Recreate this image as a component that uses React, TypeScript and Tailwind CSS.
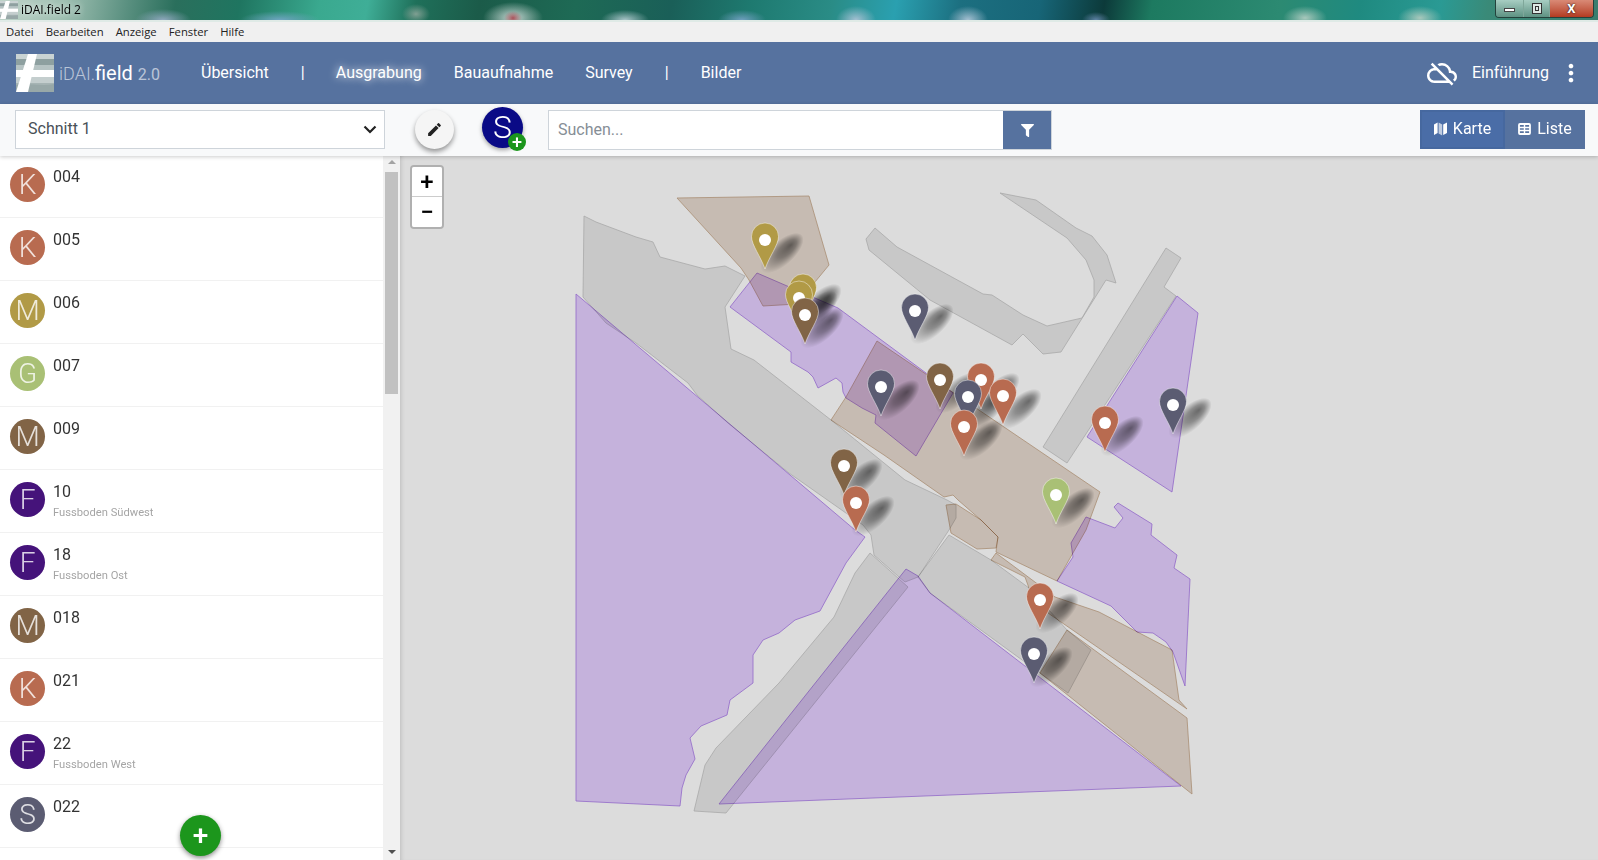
import React from "react";
import { FaFilter } from "react-icons/fa";
import { MdEdit, MdMoreVert, MdOutlineCloudOff } from "react-icons/md";

const RED = "#b86b50";
const DARK = "#5b5c72";
const BROWN = "#816446";
const GOLD = "#b19a46";
const GREEN = "#a9c075";
const PURPLE = "#45137a";

const rows = [
  { id: "004", letter: "K", color: RED },
  { id: "005", letter: "K", color: RED },
  { id: "006", letter: "M", color: GOLD },
  { id: "007", letter: "G", color: GREEN },
  { id: "009", letter: "M", color: BROWN },
  { id: "10", letter: "F", color: PURPLE, sub: "Fussboden Südwest" },
  { id: "18", letter: "F", color: PURPLE, sub: "Fussboden Ost" },
  { id: "018", letter: "M", color: BROWN },
  { id: "021", letter: "K", color: RED },
  { id: "22", letter: "F", color: PURPLE, sub: "Fussboden West" },
  { id: "022", letter: "S", color: DARK },
];

const purple = [
  "576,294 855,530 865,537 846,563 820,611 795,620 779,633 763,640 753,655 753,683 730,700 727,715 701,726 690,738 695,759 686,775 682,788 680,806 576,801",
  "719,804 906,569 918,576 930,593 1181,786",
  "757,273 838,308 926,373 953,393 916,456 875,423 876,415 862,408 846,398 843,392 842,383 836,378 818,388 813,377 808,372 791,362 791,352 730,307",
  "1177,296 1198,313 1172,492 1087,437",
  "1086,517 1115,528 1123,518 1114,507 1118,503 1152,524 1151,535 1177,555 1174,568 1190,579 1185,686 1173,652 1166,642 1153,633 1137,632 1111,606 1057,581 1073,557 1071,543",
];

const brown = [
  "677,198 809,196 829,265 815,282 797,304 763,306 749,280 741,268",
  "877,341 1100,492 1086,530 1057,581 996,552 998,537 981,520 958,500 953,495 944,497 884,455 831,420 846,397",
  "946,505 956,504 981,520 998,537 996,548 977,549 951,533",
  "996,553 991,560 1025,577 1029,588 1048,613 1187,709 1179,700 1172,650 1099,612 1055,597",
  "1067,630 1187,718 1192,794 1040,673",
];

const grey = [
  "584,216 596,222 636,237 653,242 660,257 705,269 725,266 745,276 725,307 731,349 754,360 831,420 905,480 947,500 956,505 956,518 949,530 918,577 905,582 899,577 874,555 871,535 863,525 789,473 728,423 697,395 688,383 636,343 606,323 583,297",
  "949,535 991,560 1029,588 1067,630 1091,650 1068,693 1040,673 930,593 918,577",
  "870,553 908,587 726,813 694,811 705,765 716,748 779,683 834,617 855,573",
  "875,228 897,247 983,294 992,295 1023,315 1047,326 1082,318 1094,297 1094,280 1086,260 1067,238 1000,193 1036,200 1076,228 1092,236 1107,255 1116,283 1106,280 1061,352 1043,354 1023,334 1012,345 930,300 869,250 866,239",
  "1166,248 1181,258 1164,287 1176,296 1067,463 1043,447",
];

const pins = [
  { x: 765, y: 240, color: GOLD },
  { x: 803, y: 291, color: GOLD },
  { x: 799, y: 298, color: GOLD },
  { x: 805, y: 315, color: BROWN },
  { x: 915, y: 311, color: DARK },
  { x: 981, y: 380, color: RED },
  { x: 940, y: 380, color: BROWN },
  { x: 881, y: 387, color: DARK },
  { x: 968, y: 397, color: DARK },
  { x: 1003, y: 396, color: RED },
  { x: 964, y: 427, color: RED },
  { x: 1105, y: 423, color: RED },
  { x: 1173, y: 405, color: DARK },
  { x: 844, y: 466, color: BROWN },
  { x: 856, y: 503, color: RED },
  { x: 1056, y: 495, color: GREEN },
  { x: 1040, y: 600, color: RED },
  { x: 1034, y: 654, color: DARK },
];

function Logo({ size }: { size: number }) {
  return (
    <svg width={size} height={size} viewBox="0 0 38 38">
      <rect width="38" height="38" fill="#a6b4b4" />
      <rect y="0" width="38" height="5" fill="#c9d3d3" />
      <rect y="5" width="38" height="6" fill="#8ea0a0" />
      <rect y="11" width="38" height="5" fill="#b6c3c3" />
      <rect y="23" width="38" height="6" fill="#c4cece" />
      <path d="M0 31 C10 28 25 33 38 30 V38 H0Z" fill="#98a8a8" />
      <path d="M0 16 H38 V23 H0Z" fill="#fff" />
      <path d="M0 38 L12 0 H21 L12 38Z" fill="#fff" />
    </svg>
  );
}

function TitleBar() {
  return (
    <div className="h-[22px] shrink-0 flex border-b-2 border-[#dfeae6] bg-[radial-gradient(ellipse_9px_7px_at_513px_18px,#a8525a,transparent),radial-gradient(ellipse_30px_16px_at_513px_18px,#c8d8d4,transparent),radial-gradient(ellipse_28px_11px_at_163px_20px,#8fa8bd,transparent),radial-gradient(ellipse_40px_9px_at_280px_20px,#6fa5c0,transparent),radial-gradient(ellipse_14px_10px_at_416px_14px,#7f9f92,transparent),radial-gradient(ellipse_24px_10px_at_625px_20px,#a9c4c8,transparent),radial-gradient(ellipse_24px_10px_at_742px_20px,#6f9fbe,transparent),radial-gradient(ellipse_20px_14px_at_856px_20px,#a5c0d2,transparent),radial-gradient(ellipse_20px_14px_at_968px_20px,#a5c0d2,transparent),radial-gradient(ellipse_14px_8px_at_1096px_20px,#5f83a5,transparent),radial-gradient(ellipse_22px_12px_at_1305px_18px,#a8c8bc,transparent),radial-gradient(ellipse_22px_12px_at_1420px_18px,#a8c8bc,transparent),linear-gradient(100deg,#bfd3c9_0%,#9fc0b2_4%,#5a9080_8%,#2a6f5c_11%,#1f7560_15%,#3aa98f_20%,#3fae97_23%,#1f705a_26%,#1b5b49_30%,#1e6a55_36%,#1a5f58_42%,#1e7a70_47%,#2a8c86_52%,#2aa0b0_56%,#1c6f80_60%,#176577_65%,#0c3a3a_69%,#1d7a60_72%,#2c8a72_80%,#1f8a80_85%,#2a9a94_90%,#3a8a78_93%,#3b7d6e_100%)]">
      <div className="flex items-center">
        <Logo size={18} />
        <span className="ml-[3px] font-['Open_Sans',sans-serif] text-[12px] text-black [text-shadow:0_0_6px_white]">iDAI.field 2</span>
      </div>
      <div className="ml-auto mr-[4px] flex h-[18px] w-[99px] overflow-hidden rounded-b-[4px] border border-t-0 border-[#24423c] text-white">
        <div className="flex w-[28px] items-center justify-center border-r border-[#7fa79a] bg-gradient-to-b from-[#a7cdc2] to-[#5f9384]">
          <span className="mt-[2px] h-[4px] w-[11px] border border-[#444] bg-white" />
        </div>
        <div className="flex w-[26px] items-center justify-center border-r border-[#7fa79a] bg-gradient-to-b from-[#a7cdc2] to-[#5f9384]">
          <span className="flex h-[11px] w-[10px] items-center justify-center border border-[#333] bg-[#dde8e4]">
            <span className="h-[5px] w-[4px] border border-[#333]" />
          </span>
        </div>
        <div className="flex flex-1 items-center justify-center bg-gradient-to-b from-[#d98a76] to-[#b23a20] text-[13px] font-bold leading-none [text-shadow:0_0_2px_black]">
          X
        </div>
      </div>
    </div>
  );
}

function MenuBar() {
  return (
    <div className="h-[20px] shrink-0 flex items-center gap-[12px] bg-[#f0f0f0] pl-[6px] font-['Open_Sans',sans-serif] text-[11.3px] text-[#222]">
      {["Datei", "Bearbeiten", "Anzeige", "Fenster", "Hilfe"].map((m) => (
        <span key={m}>{m}</span>
      ))}
    </div>
  );
}

function Header() {
  return (
    <header className="h-[62px] shrink-0 flex items-center bg-[#56729f] text-white">
      <div className="ml-[16px] flex">
        <Logo size={38} />
      </div>
      <div className="ml-[5px] w-[126px] whitespace-nowrap">
        <span className="text-[18px] font-light text-white/60">iDAI.</span>
        <span className="text-[20px]">field</span>
        <span className="ml-[5px] text-[16px] text-white/60">2.0</span>
      </div>
      <nav className="flex items-center text-[16px]">
        <a className="px-4">Übersicht</a>
        <span className="ml-[16px] mr-[18px] w-[1px]">|</span>
        <a className="px-4 [text-shadow:0_0_8px_white]">Ausgrabung</a>
        <a className="px-4">Bauaufnahme</a>
        <a className="px-4">Survey</a>
        <span className="ml-[16px] mr-[19px] w-[1px]">|</span>
        <a className="px-4">Bilder</a>
      </nav>
      <div className="ml-auto flex items-center">
        <MdOutlineCloudOff size={30} />
        <span className="ml-[15px] text-[16px]">Einführung</span>
        <MdMoreVert size={28} className="ml-[8px] mr-[13px]" />
      </div>
    </header>
  );
}

function Toolbar() {
  return (
    <div className="relative z-10 h-[52px] shrink-0 flex items-center bg-[#f8f9fa] shadow-[0_1px_4px_rgba(0,0,0,0.2)]">
      <div className="ml-[15px] -mt-[2px] flex h-[39px] w-[370px] items-center justify-between border border-[#ced4da] bg-white pl-[12px] pr-[7px] text-[16px] text-[#495057]">
        Schnitt 1
        <svg width="14" height="9" viewBox="0 0 14 9" fill="none" stroke="#222" strokeWidth="2.2">
          <path d="M1.5 1.5 L7 7 L12.5 1.5" />
        </svg>
      </div>
      <button className="ml-[30px] -mt-[2px] flex h-[39px] w-[39px] items-center justify-center rounded-full bg-[#f5f5f5] text-[#222] shadow-[0_3px_5px_rgba(0,0,0,0.4)]">
        <MdEdit size={17} />
      </button>
      <div className="relative ml-[28px] -mt-[6px] flex h-[41px] w-[41px] items-center justify-center rounded-full bg-[#0a0a86] text-[32px] font-light text-white shadow-[0_2px_4px_rgba(0,0,0,0.35)]">
        S
        <span className="absolute -bottom-[3px] -right-[3px] flex h-[18px] w-[18px] items-center justify-center rounded-full bg-[#1c961c] text-[18px] font-medium leading-none">+</span>
      </div>
      <div className="ml-[25px] flex h-[40px] w-[504px] border border-[#ced4da] bg-white">
        <span className="flex flex-1 items-center pl-[9px] text-[16px] text-[#868e96]">Suchen...</span>
        <span className="flex w-[48px] items-center justify-center bg-[#56729f] text-white">
          <FaFilter size={13} />
        </span>
      </div>
      <div className="ml-auto mr-[13px] -mt-[2px] flex h-[39px] text-[16px] text-white">
        <span className="flex w-[85px] items-center justify-center gap-[6px] border-2 border-[#46689f] bg-[#4a6da7]">
          <svg width="13" height="14" viewBox="0 0 13 14" fill="currentColor">
            <path d="M0 2.5 L3.6 0.5 V11 L0 13Z" />
            <path d="M4.6 0.5 L8.2 2.5 V13.5 L4.6 11.5Z" opacity="0.65" />
            <path d="M9.2 2.5 L13 0.5 V11 L9.2 13Z" />
          </svg>
          Karte
        </span>
        <span className="flex w-[80px] items-center justify-center gap-[6px] bg-[#56729f]">
          <svg width="13" height="12" viewBox="0 0 13 12" fill="none" stroke="currentColor" strokeWidth="1.8">
            <rect x="1" y="1" width="11" height="10" rx="1" />
            <path d="M6.5 1 V11 M1 4.5 H12 M1 7.5 H12" strokeWidth="1.4" />
          </svg>
          Liste
        </span>
      </div>
    </div>
  );
}

function ResourceRow({ id, letter, color, sub }: { id: string; letter: string; color: string; sub?: string }) {
  return (
    <div className="h-[63px] flex shrink-0 border-b border-[#f1f1f1] pl-[10px] pt-[12px]">
      <div className="flex h-[35px] w-[35px] shrink-0 items-center justify-center rounded-full text-[28px] font-light text-white/80" style={{ backgroundColor: color }}>
        {letter}
      </div>
      <div className="ml-[8px]">
        <div className="text-[16px] leading-[20px] text-[#333]">{id}</div>
        <div className="mt-[2px] text-[11.2px] leading-[18px] text-[#a5a5a5]">{sub}</div>
      </div>
    </div>
  );
}

function Sidebar() {
  return (
    <aside className="relative w-[400px] shrink-0 flex overflow-hidden bg-white">
      <div className="w-[383px] -mt-[1px] flex flex-col">
        {rows.map((r) => (
          <ResourceRow key={r.id} {...r} />
        ))}
      </div>
      <div className="w-[17px] flex flex-col items-center bg-[#f1f1f1]">
        <span className="mt-[4px] h-0 w-0 border-x-[4px] border-b-[4px] border-x-transparent border-b-[#a3a3a3]" />
        <span className="mt-[8px] h-[222px] w-[13px] bg-[#c1c1c1]" />
        <span className="mt-auto mb-[6px] h-0 w-0 border-x-[4px] border-t-[4px] border-x-transparent border-t-[#505050]" />
      </div>
      <button className="absolute bottom-[4px] left-[180px] flex h-[41px] w-[41px] items-center justify-center rounded-full bg-[#1c961c] text-[28px] font-medium leading-none text-white shadow-[0_2px_5px_rgba(0,0,0,0.45)]">
        +
      </button>
    </aside>
  );
}

function MapView() {
  return (
    <main className="relative flex-1 overflow-hidden bg-[#dcdcdc] shadow-[inset_4px_0_4px_-3px_rgba(0,0,0,0.15)]">
      <svg className="h-full w-full" viewBox="400 156 1198 704">
        <defs>
          <radialGradient id="pin-shadow" fx="0.72" fy="0.5">
            <stop offset="0" stopColor="#000" stopOpacity="0.52" />
            <stop offset="0.45" stopColor="#000" stopOpacity="0.36" />
            <stop offset="1" stopColor="#000" stopOpacity="0" />
          </radialGradient>
        </defs>
        {purple.map((p) => (
          <polygon key={p} points={p} fill="#e5cfff" stroke="#a878e8" strokeWidth="0.8" className="mix-blend-multiply" />
        ))}
        {brown.map((p) => (
          <polygon key={p} points={p} fill="#e6d9ce" stroke="#c4a486" strokeWidth="0.8" className="mix-blend-multiply" />
        ))}
        {grey.map((p) => (
          <polygon key={p} points={p} fill="#e8e8e8" stroke="#c4c4c4" strokeWidth="0.8" className="mix-blend-multiply" />
        ))}
        {pins.map((p, i) => (
          <ellipse key={i} cx={0} cy={0} rx="27" ry="12" fill="url(#pin-shadow)" transform={`translate(${p.x + 17} ${p.y + 13}) rotate(-42)`} />
        ))}
        {pins.map((p, i) => (
          <g key={i} transform={`translate(${p.x} ${p.y})`}>
            <path d="M0 29 C-4 17 -13.5 5 -13.5 -3.5 A13.5 13.5 0 1 1 13.5 -3.5 C13.5 5 4 17 0 29Z" fill={p.color} stroke="#fff" strokeOpacity="0.45" strokeWidth="1" />
            <circle r="6" fill="#fff" />
          </g>
        ))}
      </svg>
      <div className="absolute left-[10px] top-[9px] w-[34px] rounded-[4px] border-2 border-black/20 bg-clip-padding text-black">
        <div className="flex h-[30px] items-center justify-center rounded-t-[2px] border-b border-[#ccc] bg-white text-[24px] font-medium leading-none">+</div>
        <div className="flex h-[30px] items-center justify-center rounded-b-[2px] bg-white text-[24px] font-medium leading-none">−</div>
      </div>
    </main>
  );
}

export default function App() {
  return (
    <div className="flex h-[860px] w-[1598px] flex-col overflow-hidden font-['Roboto',sans-serif]">
      <TitleBar />
      <MenuBar />
      <Header />
      <Toolbar />
      <div className="flex min-h-0 flex-1">
        <Sidebar />
        <MapView />
      </div>
    </div>
  );
}
